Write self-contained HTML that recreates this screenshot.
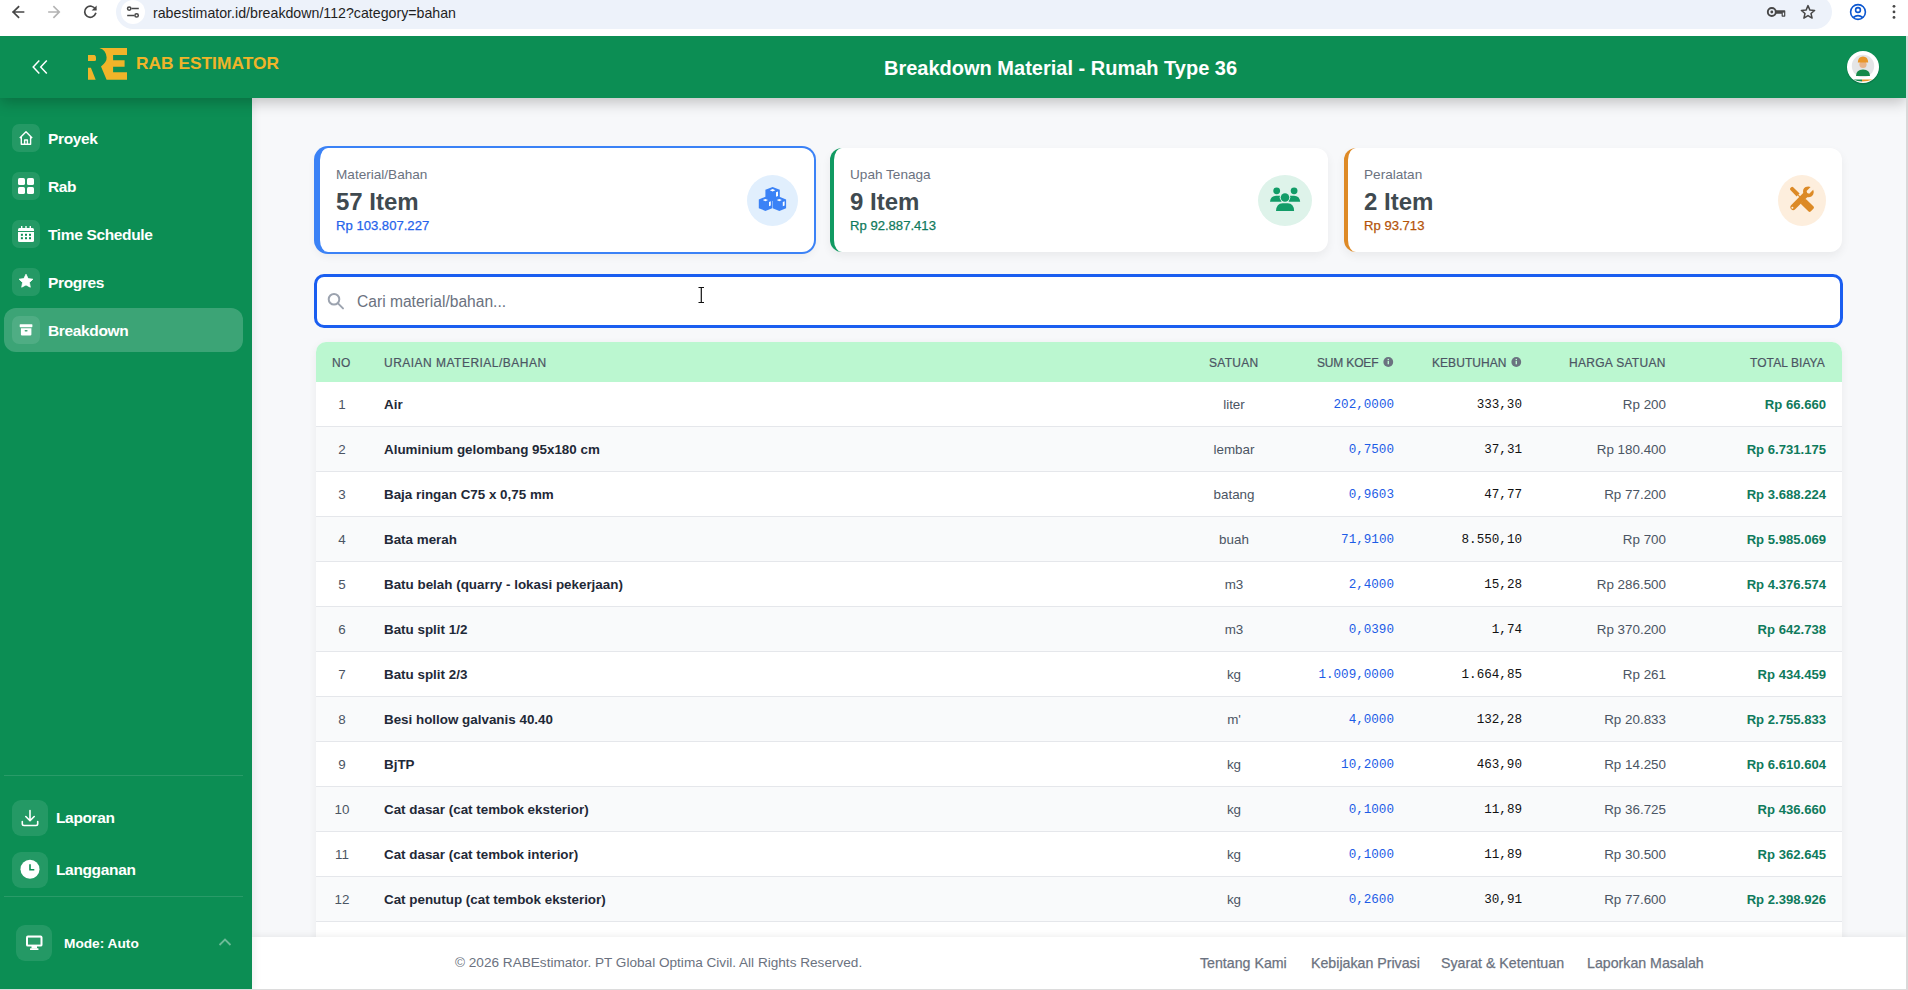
<!DOCTYPE html>
<html><head><meta charset="utf-8">
<style>
*{box-sizing:border-box;margin:0;padding:0}
html,body{width:1908px;height:990px;overflow:hidden;background:#f7f8fa;font-family:"Liberation Sans",sans-serif}
.abs{position:absolute}
#chrome{position:absolute;left:0;top:0;width:1908px;height:36px;background:#fff;z-index:8}
#pill{position:absolute;left:116px;top:-5px;width:1716px;height:34px;border-radius:17px;background:#edf2fa}
#url{position:absolute;left:153px;top:5px;font-size:14.2px;color:#1f1f1f;white-space:nowrap}
#header{position:absolute;left:0;top:36px;width:1906px;height:62px;background:#0c8e54;box-shadow:0 4px 14px rgba(0,0,0,.24);z-index:5}
#rightline{position:absolute;left:1906px;top:36px;width:2px;height:954px;background:#d9d9d9;z-index:9}
#sidebar{position:absolute;left:0;top:98px;width:252px;height:892px;background:#0c8e54;z-index:4;box-shadow:2px 0 8px rgba(0,0,0,.07)}
.nav{position:absolute;left:0;width:252px;height:28px}
.nav .ib{position:absolute;left:12px;top:0;width:28px;height:28px;border-radius:7px;background:rgba(255,255,255,.1)}
.nav .t{position:absolute;left:48px;top:6px;font-size:15.5px;letter-spacing:-.35px;font-weight:bold;color:#fff;white-space:nowrap;line-height:18px}
#main{position:absolute;left:252px;top:98px;width:1654px;height:892px;background:#f7f8fa}
.card{position:absolute;top:148px;width:498px;height:104px;background:#fff;border-radius:12px;box-shadow:0 4px 10px rgba(0,0,0,.06);border-left:4px solid}
.card .lb{position:absolute;left:4px;top:0;width:4px;height:104px}
.card .l1{position:absolute;left:16px;top:19px;font-size:13.6px;color:#6b7280;white-space:nowrap}
.card .l2{position:absolute;left:16px;top:40px;font-size:24px;font-weight:bold;color:#3f4a50;white-space:nowrap}
.card .l3{position:absolute;left:16px;top:70px;font-size:13.1px;white-space:nowrap;-webkit-text-stroke:.25px currentColor}
.card .ic{position:absolute;top:27px;width:50px;height:50px;border-radius:50%}
#search{position:absolute;left:314px;top:274px;width:1529px;height:54px;border:3px solid #1a5ef0;border-radius:10px;background:#fff}
#table{position:absolute;left:316px;top:342px;width:1526px;height:600px;background:#fff;border-radius:10px 10px 0 0;box-shadow:0 2px 8px rgba(0,0,0,.06);overflow:hidden}
#thead{position:absolute;left:0;top:0;width:1526px;height:40px;background:#bbf7d0}
.th{position:absolute;top:14px;font-size:12px;color:#4b5563;-webkit-text-stroke:.2px #4b5563;letter-spacing:.3px;white-space:nowrap;line-height:14px}
.row{position:absolute;left:0;width:1526px;height:45px;border-bottom:1px solid #e5e7eb}
.row.s{background:#f9fafb}
.c{position:absolute;top:14.5px;font-size:13.4px;white-space:nowrap;line-height:16px}
.no{color:#4b5563;text-align:center;width:52px;left:0}
.nm{left:68px;color:#1f2937;font-weight:bold}
.st{color:#4b5563;text-align:center;width:100px;left:868px}
.sk{color:#1d5ce6;font-family:"Liberation Mono",monospace;font-size:12.6px;text-align:right;right:448px}
.kb{color:#111;font-family:"Liberation Mono",monospace;font-size:12.6px;text-align:right;right:320px}
.hs{color:#4b5563;text-align:right;right:176px}
.tb{color:#0f7a5c;font-weight:bold;text-align:right;right:16px;font-size:13.1px}
#footer{position:absolute;left:252px;top:937px;width:1654px;height:53px;background:#fff;box-shadow:0 -2px 6px rgba(0,0,0,.06);z-index:3}
.ft{position:absolute;top:18px;font-size:13.6px;color:#6b7280;white-space:nowrap}
.fl{font-size:14.2px;-webkit-text-stroke:.25px #6b7280}
</style></head><body>
<div id="chrome">
  <div id="pill"></div>
  <div id="url">rabestimator.id/breakdown/112?category=bahan</div>
</div>
<div id="header">
  <div class="abs" style="left:136px;top:17px;font-size:17.35px;font-weight:bold;color:#f0b429;white-space:nowrap;line-height:20px">RAB ESTIMATOR</div>
  <div class="abs" style="left:884px;top:21px;font-size:20px;font-weight:bold;color:#fff;white-space:nowrap;line-height:22px">Breakdown Material - Rumah Type 36</div>
</div>
<div id="rightline"></div>
<div class="abs" style="left:0;top:989px;width:1908px;height:1px;background:#dcdcdc;z-index:60"></div>
<div id="sidebar">
  <div class="nav" style="top:26px"><div class="ib"></div><div class="t">Proyek</div></div>
  <div class="nav" style="top:74px"><div class="ib"></div><div class="t">Rab</div></div>
  <div class="nav" style="top:122px"><div class="ib"></div><div class="t">Time Schedule</div></div>
  <div class="nav" style="top:170px"><div class="ib"></div><div class="t">Progres</div></div>
  <div class="abs" style="left:4px;top:210px;width:239px;height:44px;border-radius:12px;background:rgba(255,255,255,.2)"></div>
  <div class="nav" style="top:218px"><div class="ib"></div><div class="t">Breakdown</div></div>
  <div class="abs" style="left:4px;top:677px;width:239px;height:1px;background:rgba(255,255,255,.12)"></div>
  <div class="nav" style="top:702px;height:36px"><div class="ib" style="width:36px;height:36px;border-radius:9px"></div><div class="t" style="left:56px;top:9px">Laporan</div></div>
  <div class="nav" style="top:754px;height:36px"><div class="ib" style="width:36px;height:36px;border-radius:9px"></div><div class="t" style="left:56px;top:9px">Langganan</div></div>
  <div class="abs" style="left:4px;top:798px;width:239px;height:1px;background:rgba(255,255,255,.12)"></div>
  <div class="abs" style="left:16px;top:827px;width:36px;height:36px;border-radius:9px;background:rgba(255,255,255,.1)"></div>
  <div class="abs" style="left:64px;top:838px;font-size:13.7px;font-weight:bold;color:#fff;white-space:nowrap;line-height:16px">Mode: Auto</div>
</div>
<div id="main"></div>
<div class="card" style="border-color:#3b82f6;left:316px;box-shadow:0 0 0 2px #3b82f6,0 4px 10px rgba(0,0,0,.06)">
  <div class="l1">Material/Bahan</div><div class="l2">57 Item</div><div class="l3" style="color:#2563eb">Rp 103.807.227</div>
  <div class="ic" style="left:427px;top:27px;width:51px;height:51px;background:#e1effd"></div></div>
<div class="card" style="border-color:#119a62;left:830px">
  <div class="l1">Upah Tenaga</div><div class="l2">9 Item</div><div class="l3" style="color:#0f7a5c">Rp 92.887.413</div>
  <div class="ic" style="left:424px;top:27px;width:54px;height:51px;background:#def3ea"></div></div>
<div class="card" style="border-color:#de8a26;left:1344px">
  <div class="l1">Peralatan</div><div class="l2">2 Item</div><div class="l3" style="color:#b45309">Rp 93.713</div>
  <div class="ic" style="left:430px;top:27px;width:48px;height:51px;background:#fdeedd"></div></div>
<div id="search"><div class="abs" style="left:40px;top:16px;font-size:15.6px;color:#6b7280;white-space:nowrap">Cari material/bahan...</div></div>
<div id="table">
<div id="thead">
<div class="th" style="left:16px">NO</div>
<div class="th" style="left:68px;letter-spacing:.48px">URAIAN MATERIAL/BAHAN</div>
<div class="th" style="left:893px">SATUAN</div>
<div class="th" style="left:1001px;letter-spacing:-.17px">SUM KOEF</div>
<div class="th" style="left:1116px;letter-spacing:.05px">KEBUTUHAN</div>
<div class="th" style="left:1253px">HARGA SATUAN</div>
<div class="th" style="left:1434px;letter-spacing:.08px">TOTAL BIAYA</div>
</div>
<div class="row" style="top:40px"><div class="c no">1</div><div class="c nm">Air</div><div class="c st">liter</div><div class="c sk">202,0000</div><div class="c kb">333,30</div><div class="c hs">Rp 200</div><div class="c tb">Rp 66.660</div></div>
<div class="row s" style="top:85px"><div class="c no">2</div><div class="c nm">Aluminium gelombang 95x180 cm</div><div class="c st">lembar</div><div class="c sk">0,7500</div><div class="c kb">37,31</div><div class="c hs">Rp 180.400</div><div class="c tb">Rp 6.731.175</div></div>
<div class="row" style="top:130px"><div class="c no">3</div><div class="c nm">Baja ringan C75 x 0,75 mm</div><div class="c st">batang</div><div class="c sk">0,9603</div><div class="c kb">47,77</div><div class="c hs">Rp 77.200</div><div class="c tb">Rp 3.688.224</div></div>
<div class="row s" style="top:175px"><div class="c no">4</div><div class="c nm">Bata merah</div><div class="c st">buah</div><div class="c sk">71,9100</div><div class="c kb">8.550,10</div><div class="c hs">Rp 700</div><div class="c tb">Rp 5.985.069</div></div>
<div class="row" style="top:220px"><div class="c no">5</div><div class="c nm">Batu belah (quarry - lokasi pekerjaan)</div><div class="c st">m3</div><div class="c sk">2,4000</div><div class="c kb">15,28</div><div class="c hs">Rp 286.500</div><div class="c tb">Rp 4.376.574</div></div>
<div class="row s" style="top:265px"><div class="c no">6</div><div class="c nm">Batu split 1/2</div><div class="c st">m3</div><div class="c sk">0,0390</div><div class="c kb">1,74</div><div class="c hs">Rp 370.200</div><div class="c tb">Rp 642.738</div></div>
<div class="row" style="top:310px"><div class="c no">7</div><div class="c nm">Batu split 2/3</div><div class="c st">kg</div><div class="c sk">1.009,0000</div><div class="c kb">1.664,85</div><div class="c hs">Rp 261</div><div class="c tb">Rp 434.459</div></div>
<div class="row s" style="top:355px"><div class="c no">8</div><div class="c nm">Besi hollow galvanis 40.40</div><div class="c st">m'</div><div class="c sk">4,0000</div><div class="c kb">132,28</div><div class="c hs">Rp 20.833</div><div class="c tb">Rp 2.755.833</div></div>
<div class="row" style="top:400px"><div class="c no">9</div><div class="c nm">BjTP</div><div class="c st">kg</div><div class="c sk">10,2000</div><div class="c kb">463,90</div><div class="c hs">Rp 14.250</div><div class="c tb">Rp 6.610.604</div></div>
<div class="row s" style="top:445px"><div class="c no">10</div><div class="c nm">Cat dasar (cat tembok eksterior)</div><div class="c st">kg</div><div class="c sk">0,1000</div><div class="c kb">11,89</div><div class="c hs">Rp 36.725</div><div class="c tb">Rp 436.660</div></div>
<div class="row" style="top:490px"><div class="c no">11</div><div class="c nm">Cat dasar (cat tembok interior)</div><div class="c st">kg</div><div class="c sk">0,1000</div><div class="c kb">11,89</div><div class="c hs">Rp 30.500</div><div class="c tb">Rp 362.645</div></div>
<div class="row s" style="top:535px"><div class="c no">12</div><div class="c nm">Cat penutup (cat tembok eksterior)</div><div class="c st">kg</div><div class="c sk">0,2600</div><div class="c kb">30,91</div><div class="c hs">Rp 77.600</div><div class="c tb">Rp 2.398.926</div></div>
<div class="row" style="top:580px"></div>

</div>
<div id="footer">
  <div class="ft" style="left:203px">© 2026 RABEstimator. PT Global Optima Civil. All Rights Reserved.</div>
  <div class="ft fl" style="left:948px">Tentang Kami</div>
  <div class="ft fl" style="left:1059px">Kebijakan Privasi</div>
  <div class="ft fl" style="left:1189px">Syarat &amp; Ketentuan</div>
  <div class="ft fl" style="left:1335px">Laporkan Masalah</div>
</div>
<svg id="ov" width="1908" height="990" viewBox="0 0 1908 990" style="position:absolute;left:0;top:0;z-index:50;pointer-events:none">
<!-- chrome -->
<g fill="none" stroke="#474747" stroke-width="1.7" stroke-linecap="square">
  <path d="M13 12H23.5M18.5 6.8L13.2 12L18.5 17.2"/>
  <path d="M49 12H59M54 6.8L59.2 12L54 17.2" stroke="#b3b3b3"/>
  <path d="M95.3 9.2A5.6 5.6 0 1 0 95.6 13.5"/>
</g>
<path d="M96.6 5.6V10.6H91.6Z" fill="#474747"/>
<circle cx="133" cy="12" r="12" fill="#fff"/>
<g stroke="#474747" stroke-width="1.5" fill="none">
  <path d="M131.5 8.6H138.8M127.2 15.4H134.3"/>
  <circle cx="129.2" cy="8.6" r="1.7"/><circle cx="136.6" cy="15.4" r="1.7"/>
</g>
<g fill="none" stroke="#474747" stroke-width="1.7">
  <circle cx="1771.8" cy="12" r="4" stroke-width="1.9"/>
  <path d="M1808 5.6L1809.9 10.1L1814.6 10.4L1811 13.5L1812.1 18.1L1808 15.6L1803.9 18.1L1805 13.5L1801.4 10.4L1806.1 10.1Z" stroke-linejoin="round" stroke-width="1.5"/>
</g>
<circle cx="1771.8" cy="12" r="1.4" fill="#474747"/><path d="M1775.6 10.3H1784.6Q1785.3 10.3 1785.3 11V16Q1785.3 16.8 1784.6 16.8H1782.3Q1781.6 16.8 1781.6 16V13.7H1775.6Z" fill="#474747"/><rect x="1782.8" y="12.6" width="1.3" height="2.9" fill="#edf2fa"/>
<g fill="none" stroke="#0b57d0" stroke-width="1.6">
  <circle cx="1858" cy="12" r="7.4"/>
  <circle cx="1858" cy="10" r="2.4"/>
  <path d="M1853.3 17.5Q1858 13.8 1862.7 17.5"/>
</g>
<g fill="#474747"><circle cx="1894" cy="6.3" r="1.4"/><circle cx="1894" cy="11.9" r="1.4"/><circle cx="1894" cy="17.4" r="1.4"/></g>
<!-- header -->
<g fill="none" stroke="#fff" stroke-width="1.5">
  <path d="M39.3 60.5L33.2 67L39.3 73.5M46.8 60.5L40.7 67L46.8 73.5"/>
</g>
<g fill="#f0b429">
  <path d="M99.4 48H127V55H113.1V60.2H124.6V66.8H113.1V72.3H127V79.8H106.6L101 66.4Q107 62 106.6 57.3Q106 50 99.4 48Z"/>
  <path d="M88 55H94.5Q96 55.5 96 57.5V59.5Q96 61 94.5 61H88Z"/>
  <path d="M88 67.8H90.9L95.7 79.8H88Z"/>
</g>
<!-- avatar -->
<circle cx="1863" cy="68" r="16.5" fill="rgba(0,0,0,.12)"/>
<circle cx="1863" cy="67" r="16" fill="#fff"/>
<circle cx="1863" cy="66" r="11.2" fill="#e4e5e7"/>
<path d="M1856 76Q1856 69.5 1863 69.5Q1870 69.5 1870 76Z" fill="#15894a"/>
<circle cx="1863" cy="64.5" r="3.6" fill="#e8b48a"/>
<path d="M1857.8 62.5Q1858 56.5 1863 56.5Q1868 56.5 1868.2 62.5Z" fill="#e9962a"/>
<path d="M1853.5 79.5H1862V81.5Q1857 81.5 1853.5 79.5Z" fill="#15894a"/>
<path d="M1862 79.5H1872.5Q1868 81.5 1862 81.5Z" fill="#e9962a"/>
<!-- sidebar icons -->
<g fill="none" stroke="#fff" stroke-width="1.4" stroke-linejoin="round">
  <path d="M19.8 138L26 131.8L32.2 138M21.3 136.8V144.2H30.6V136.8M24.6 144.2V140H27.4V144.2"/>
</g>
<g fill="#fff">
  <rect x="18" y="178" width="7" height="7" rx="1.6"/><rect x="27" y="178" width="7" height="7" rx="1.6"/>
  <rect x="18" y="187" width="7" height="7" rx="1.6"/><rect x="27" y="187" width="7" height="7" rx="1.6"/>
  <path d="M18 229.5Q18 228 19.5 228H32.5Q34 228 34 229.5V231H18Z"/>
  <rect x="21" y="226" width="1.4" height="3"/><rect x="25.3" y="226" width="1.4" height="3"/><rect x="29.6" y="226" width="1.4" height="3"/>
  <path d="M18 232H34V240.5Q34 242 32.5 242H19.5Q18 242 18 240.5Z"/>
  <path d="M26 274.2L28.1 278.6L32.9 279.2L29.4 282.5L30.3 287.2L26 284.9L21.7 287.2L22.6 282.5L19.1 279.2L23.9 278.6Z" stroke="#fff" stroke-width="0.8" stroke-linejoin="round"/>
  <rect x="19.7" y="324.2" width="12.7" height="3" rx="0.6"/>
  <path d="M20.9 328.2H31.4V334.5Q31.4 335.6 30.3 335.6H22Q20.9 335.6 20.9 334.5Z"/>
</g>
<rect x="24.6" y="330.1" width="3" height="1.3" rx=".6" fill="#4aa77e"/>
<g fill="#0c8e54">
  <rect x="20.9" y="233.8" width="2" height="2"/><rect x="25" y="233.8" width="2" height="2"/><rect x="29" y="233.8" width="2" height="2"/>
  <rect x="20.9" y="237.2" width="2" height="2"/><rect x="25" y="237.2" width="2" height="2"/><rect x="29" y="237.2" width="2" height="2"/>
</g>
<g fill="none" stroke="#fff" stroke-width="1.6" stroke-linecap="round" stroke-linejoin="round">
  <path d="M30 810.5V820.5M25.8 816.5L30 820.7L34.2 816.5M22.3 821.5V823.8Q22.3 825.5 24 825.5H36Q37.7 825.5 37.7 823.8V821.5"/>
</g>
<circle cx="30" cy="869.3" r="9.5" fill="#fff"/>
<path d="M30 864.3V869.8H34.3" fill="none" stroke="#0c8e54" stroke-width="1.6"/>
<g fill="#fff">
  <path d="M26 937.5Q26 935.6 27.9 935.6H40.6Q42.5 935.6 42.5 937.5V944.7Q42.5 946.6 40.6 946.6H27.9Q26 946.6 26 944.7Z"/>
  <rect x="31.5" y="946" width="5.5" height="2.5"/><rect x="30" y="948.3" width="8.5" height="1.7" rx=".5"/>
</g>
<rect x="28" y="937.6" width="12.5" height="7" fill="#2a9c69"/>
<path d="M219.5 945L225 939.5L230.5 945" fill="none" stroke="rgba(255,255,255,.4)" stroke-width="1.8"/>
<!-- card icons -->
<g fill="#3b82f6">
  <path d="M772.6 187L779.8 189.8V198.2L772.6 201L765.4 198.2V189.8Z"/>
  <path d="M765.4 196.8L772.2 199.4V208.2L765.4 210.9L758.8 208.2V199.4Z"/>
  <path d="M779.4 196.8L786.1 199.4V208.2L779.4 210.9L772.6 208.2V199.4Z"/>
</g>
<g fill="#fff">
  <path d="M769.8 190.3L772.6 189.1L775.4 190.3L772.6 191.5Z"/>
  <path d="M776 192.2L778 191.4V196L776 196.8Z"/>
  <path d="M762.8 200.1L765.4 199L768 200.1L765.4 201.2Z"/>
  <path d="M769 202L770.8 201.3V205.6L769 206.3Z"/>
  <path d="M776.7 200.1L779.3 199L781.9 200.1L779.3 201.2Z"/>
  <path d="M782.8 202L784.6 201.3V205.6L782.8 206.3Z"/>
</g>
<g fill="#129c68">
  <circle cx="1276.7" cy="190.8" r="3.4"/><circle cx="1294.1" cy="190.8" r="3.4"/>
  <path d="M1270 201.8Q1270.5 195.8 1276.2 195.8H1281.5V201.8Z"/>
  <path d="M1300.2 201.8Q1299.7 195.8 1294 195.8H1288.7V201.8Z"/>
</g>
<circle cx="1285" cy="197.3" r="5.3" fill="#def3ea"/>
<circle cx="1285" cy="197.5" r="4.3" fill="#129c68"/>
<path d="M1276 210.9Q1276.5 203.2 1282.5 203.2H1287.8Q1293.8 203.2 1294.1 210.9Z" fill="#129c68"/>
<g fill="#dc8a26">
  <path d="M1791.6 191.2L1790.4 190Q1789.6 189 1790.4 188L1791.2 187.2Q1792.2 186.4 1793.2 187.2L1799.6 193.6L1796.6 196.6Z"/>
  <path d="M1798.2 195.2L1803.8 200.8" stroke="#dc8a26" stroke-width="1.2" fill="none"/>
  <path d="M1800.4 203.4L1804.4 199.4Q1805.4 198.6 1806.4 199.4L1813.6 206.6Q1814.4 207.6 1813.6 208.6L1810.6 211.6Q1809.6 212.4 1808.6 211.6L1801.4 204.4Q1800.6 203.4 1801.4 203.4Z"/>
  <path d="M1791.3 205L1803.2 193.1Q1802.4 188.6 1805.6 187.1Q1808.4 186 1810.6 187.1L1806.6 191.1L1807.2 193.1L1809.2 193.7L1813.2 189.7Q1814.3 192 1813.3 194.3Q1811.6 197.8 1807.2 197.2L1795.2 209.2Q1793.2 211.2 1791.2 209.2Q1789.3 207.2 1791.3 205Z"/>
</g>
<circle cx="1792.4" cy="207.7" r="1" fill="#fdeedd"/>
<!-- search icon -->
<g fill="none" stroke="#9ca3af" stroke-width="2">
  <circle cx="334" cy="299.3" r="5.3"/>
  <path d="M338 303.4L343 308.4" stroke-linecap="round"/>
</g>
<!-- info icons -->
<circle cx="1388.3" cy="362" r="4.9" fill="#6b7280"/>
<rect x="1387.6" y="361" width="1.4" height="3.3" fill="#bbf7d0"/><rect x="1387.6" y="358.9" width="1.4" height="1.3" fill="#bbf7d0"/>
<circle cx="1516.3" cy="362" r="4.9" fill="#6b7280"/>
<rect x="1515.6" y="361" width="1.4" height="3.3" fill="#bbf7d0"/><rect x="1515.6" y="358.9" width="1.4" height="1.3" fill="#bbf7d0"/>
<!-- text cursor -->
<path d="M698.5 287.5H704M701.3 288V302.5M698.5 302.5H704" stroke="#111" stroke-width="1.2" fill="none"/>
</svg>

</body></html>
